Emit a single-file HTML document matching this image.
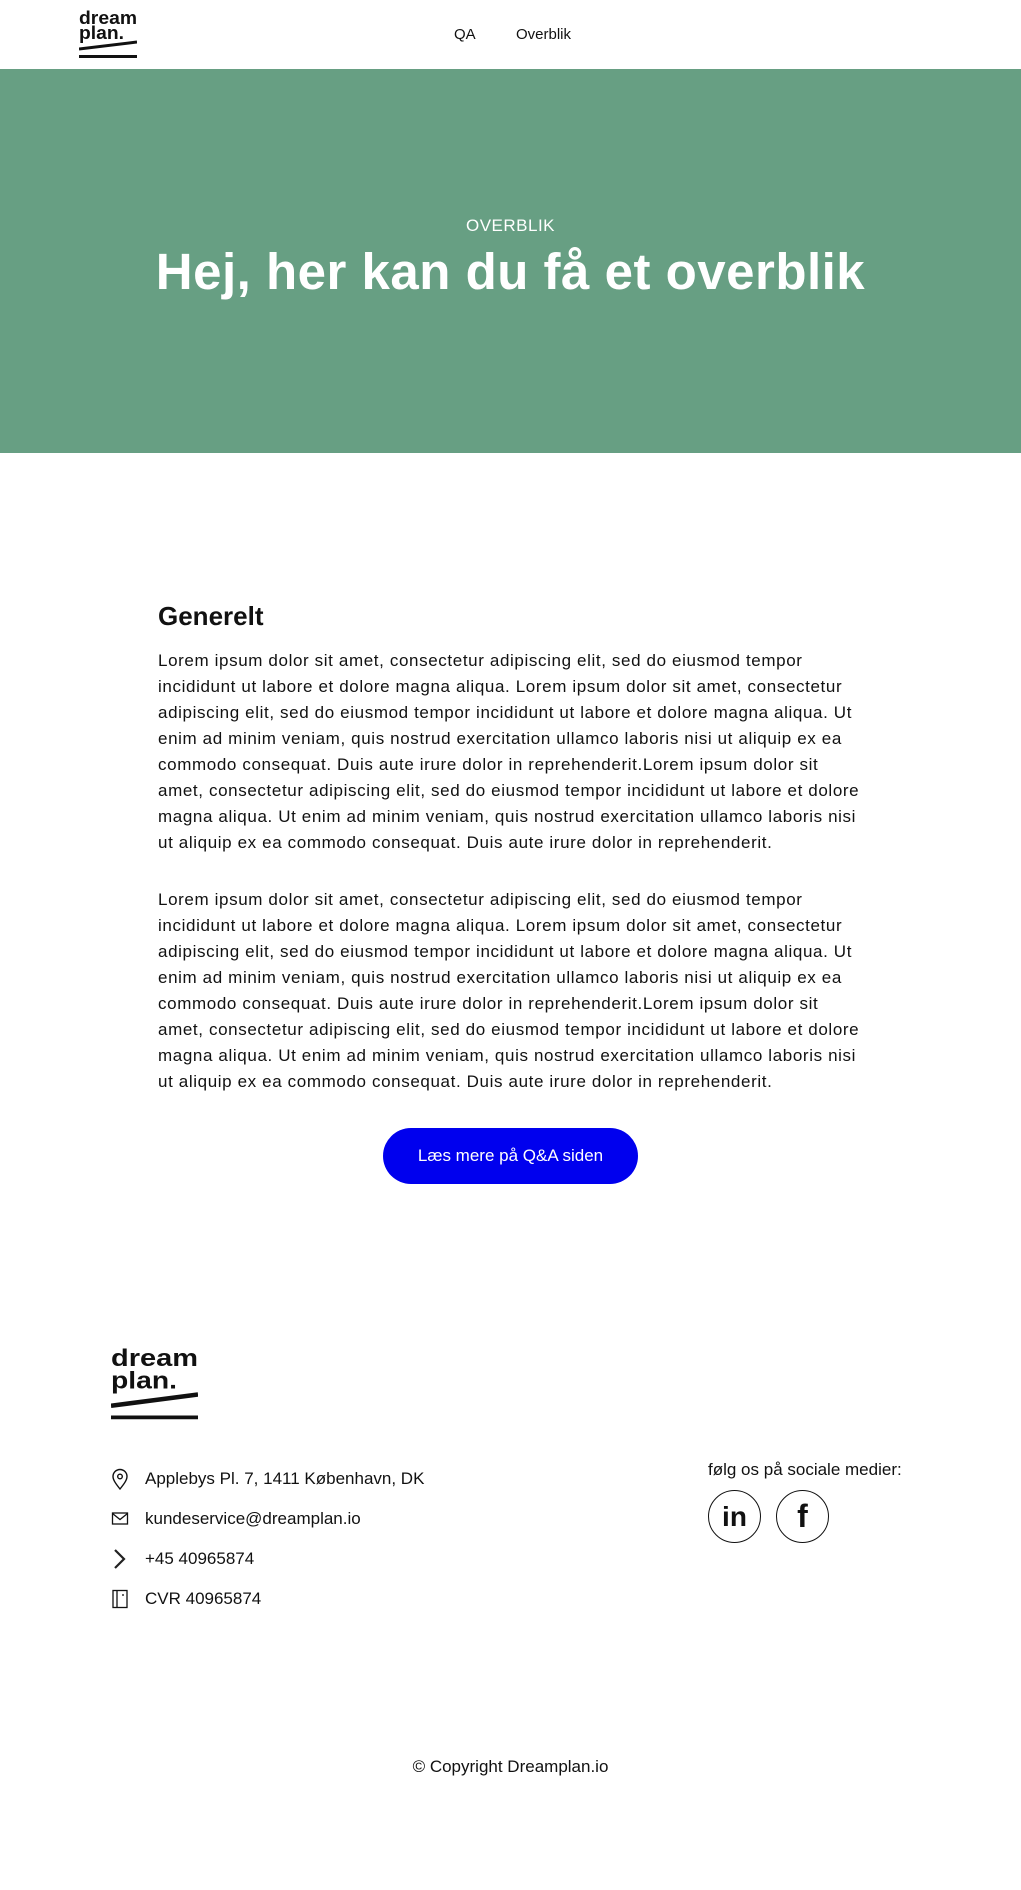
<!DOCTYPE html>
<html><head><meta charset="utf-8">
<style>
*{margin:0;padding:0;box-sizing:border-box}
body{width:1021px;height:1890px;background:#fff;font-family:"Liberation Sans",sans-serif;color:#111;position:relative;overflow:hidden}
.abs{position:absolute}
.nav a{position:absolute;top:26px;font-size:15px;color:#111;text-decoration:none}
.hero{position:absolute;left:0;top:69px;width:1021px;height:384px;background:#679f83;color:#fff;text-align:center}
.p{position:absolute;left:158px;font-size:17px;line-height:26px;letter-spacing:0.62px;white-space:nowrap;color:#111}
.btn{position:absolute;left:383px;top:1128px;width:255px;height:56px;border-radius:28px;background:#0000ee;color:#fff;font-size:17px;text-align:center;line-height:56px}
.row{position:absolute;left:111px;height:24px;display:flex;align-items:center;font-size:17px}
.row svg{width:18px;height:22px;margin-right:16px}
.soc{position:absolute;top:1490px;width:53px;height:53px;border:1.6px solid #111;border-radius:50%;display:flex;align-items:center;justify-content:center;font-weight:bold;font-size:28px}
</style></head><body>
<svg class="abs" style="left:79px;top:10px" width="58" height="48" viewBox="0 0 58 48">
<text x="0" y="14" font-family="Liberation Sans" font-weight="bold" font-size="18" fill="#111" textLength="58" lengthAdjust="spacingAndGlyphs">dream</text>
<text x="0" y="29" font-family="Liberation Sans" font-weight="bold" font-size="18" fill="#111" textLength="45" lengthAdjust="spacingAndGlyphs">plan.</text>
<line x1="0" y1="39" x2="58" y2="32" stroke="#111" stroke-width="3"/>
<rect x="0" y="45" width="58" height="3" fill="#111"/>
</svg>
<div class="nav"><a style="left:454px">QA</a><a style="left:516px">Overblik</a></div>
<div class="hero">
<div style="position:absolute;top:147px;width:100%;font-size:17px;letter-spacing:0.5px">OVERBLIK</div>
<div style="position:absolute;top:173px;width:100%;font-size:51px;font-weight:bold;letter-spacing:0.5px">Hej, her kan du få et overblik</div>
</div>
<div class="abs" style="left:158px;top:601px;font-size:26px;font-weight:bold">Generelt</div>
<div class="p" style="top:648px">Lorem ipsum dolor sit amet, consectetur adipiscing elit, sed do eiusmod tempor<br>incididunt ut labore et dolore magna aliqua. Lorem ipsum dolor sit amet, consectetur<br>adipiscing elit, sed do eiusmod tempor incididunt ut labore et dolore magna aliqua. Ut<br>enim ad minim veniam, quis nostrud exercitation ullamco laboris nisi ut aliquip ex ea<br>commodo consequat. Duis aute irure dolor in reprehenderit.Lorem ipsum dolor sit<br>amet, consectetur adipiscing elit, sed do eiusmod tempor incididunt ut labore et dolore<br>magna aliqua. Ut enim ad minim veniam, quis nostrud exercitation ullamco laboris nisi<br>ut aliquip ex ea commodo consequat. Duis aute irure dolor in reprehenderit.</div>
<div class="p" style="top:887px">Lorem ipsum dolor sit amet, consectetur adipiscing elit, sed do eiusmod tempor<br>incididunt ut labore et dolore magna aliqua. Lorem ipsum dolor sit amet, consectetur<br>adipiscing elit, sed do eiusmod tempor incididunt ut labore et dolore magna aliqua. Ut<br>enim ad minim veniam, quis nostrud exercitation ullamco laboris nisi ut aliquip ex ea<br>commodo consequat. Duis aute irure dolor in reprehenderit.Lorem ipsum dolor sit<br>amet, consectetur adipiscing elit, sed do eiusmod tempor incididunt ut labore et dolore<br>magna aliqua. Ut enim ad minim veniam, quis nostrud exercitation ullamco laboris nisi<br>ut aliquip ex ea commodo consequat. Duis aute irure dolor in reprehenderit.</div>
<div class="btn">Læs mere på Q&amp;A siden</div>

<svg class="abs" style="left:111px;top:1348px" width="87" height="72" viewBox="0 0 58 48">
<text x="0" y="12" font-family="Liberation Sans" font-weight="bold" font-size="16" fill="#111" textLength="58" lengthAdjust="spacingAndGlyphs">dream</text>
<text x="0" y="27" font-family="Liberation Sans" font-weight="bold" font-size="16" fill="#111" textLength="44" lengthAdjust="spacingAndGlyphs">plan.</text>
<line x1="0" y1="38.5" x2="58" y2="31" stroke="#111" stroke-width="3"/>
<rect x="0" y="45" width="58" height="2.5" fill="#111"/>
</svg>

<div class="row" style="top:1467px"><svg viewBox="0 0 18 22"><path d="M9 21C5 16 2 12 2 8.5a7 7 0 0 1 14 0C16 12 13 16 9 21z" fill="none" stroke="#111" stroke-width="1.4"/><circle cx="9" cy="8.5" r="2.3" fill="none" stroke="#111" stroke-width="1.4"/></svg>Applebys Pl. 7, 1411 København, DK</div>
<div class="row" style="top:1507px"><svg viewBox="0 0 18 22"><rect x="1.5" y="5" width="15" height="11" fill="none" stroke="#111" stroke-width="1.3"/><path d="M1.5 5.5L9 11.5L16.5 5.5" fill="none" stroke="#111" stroke-width="1.3"/></svg>kundeservice@dreamplan.io</div>
<div class="row" style="top:1547px"><svg viewBox="0 0 18 22"><path d="M4 2L13 11L4 20" fill="none" stroke="#222" stroke-width="2.2"/></svg>+45 40965874</div>
<div class="row" style="top:1587px"><svg viewBox="0 0 18 22"><rect x="2" y="2.5" width="14" height="17" fill="none" stroke="#111" stroke-width="1.3"/><line x1="6" y1="2.5" x2="6" y2="19.5" stroke="#111" stroke-width="1.3"/><line x1="12" y1="6" x2="12" y2="8" stroke="#111" stroke-width="1.3"/></svg>CVR 40965874</div>

<div class="abs" style="left:708px;top:1460px;font-size:17px">følg os på sociale medier:</div>
<div class="soc" style="left:708px">in</div>
<div class="soc" style="left:776px;font-size:32px">f</div>

<div class="abs" style="left:0;top:1757px;width:1021px;text-align:center;font-size:17px">© Copyright Dreamplan.io</div>
</body></html>
